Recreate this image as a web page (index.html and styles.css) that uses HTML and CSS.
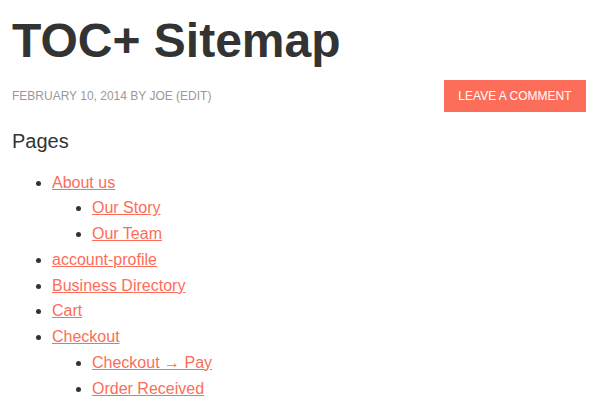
FILE: index.html
```html
<!DOCTYPE html>
<html lang="en">

<head>
    <meta charset="UTF-8">
    <meta name="viewport" content="width=device-width, initial-scale=1.0">
    <title>TOC+ Sitemap</title>
    <link rel="stylesheet" href="styles.css">
</head>

<body>
    <div class="container">
        <h1 class="entry-title">TOC+ Sitemap</h1>

        <!-- Post meta -->
        <div class="entry-meta">
            <span class="meta-text">February 10, 2014 by Joe (<a href="#">Edit</a>)</span>
            <a href="#" class="comment-btn">Leave a comment</a>
        </div>

        <!-- Sitemap -->
        <h2 class="sitemap-heading">Pages</h2>
        <ul class="sitemap">
            <li><a href="#">About us</a>
                <ul>
                    <li><a href="#">Our Story</a></li>
                    <li><a href="#">Our Team</a></li>
                </ul>
            </li>
            <li><a href="#">account-profile</a></li>
            <li><a href="#">Business Directory</a></li>
            <li><a href="#">Cart</a></li>
            <li><a href="#">Checkout</a>
                <ul>
                    <li><a href="#">Checkout &rarr; Pay</a></li>
                    <li><a href="#">Order Received</a></li>
                </ul>
            </li>
        </ul>
    </div>
</body>

</html>
```

FILE: styles.css
```css
body {
    font-family: "Liberation Sans", Arial, sans-serif;
    margin: 0;
    padding: 0;
    background-color: #fff;
    color: #333;
}

.container {
    padding: 0 14px 0 12px;
}

.entry-title {
    font-size: 48px;
    font-weight: bold;
    line-height: 1.2;
    margin: 12px 0 10px;
    color: #333;
}

.entry-meta {
    display: flex;
    justify-content: space-between;
    align-items: center;
    height: 32px;
}

.meta-text {
    font-size: 12px;
    text-transform: uppercase;
    color: #999;
    padding-top: 1px;
}

.meta-text a {
    color: #999;
    text-decoration: none;
}

.comment-btn {
    display: flex;
    align-items: center;
    height: 32px;
    padding: 0 14.5px;
    background-color: #fc6d5a;
    color: #fff;
    font-size: 12px;
    text-transform: uppercase;
    text-decoration: none;
}

.sitemap-heading {
    font-size: 20px;
    font-weight: normal;
    line-height: 1.2;
    margin: 17px 0 0;
    color: #333;
}

.sitemap {
    font-size: 16px;
    line-height: 25.75px;
    margin: 17px 0 0;
    padding-left: 40px;
    list-style: disc;
}

.sitemap ul {
    margin: 0;
    padding-left: 40px;
    list-style: disc;
}

.sitemap a {
    color: #fc6d5a;
    text-decoration: underline;
}
```
